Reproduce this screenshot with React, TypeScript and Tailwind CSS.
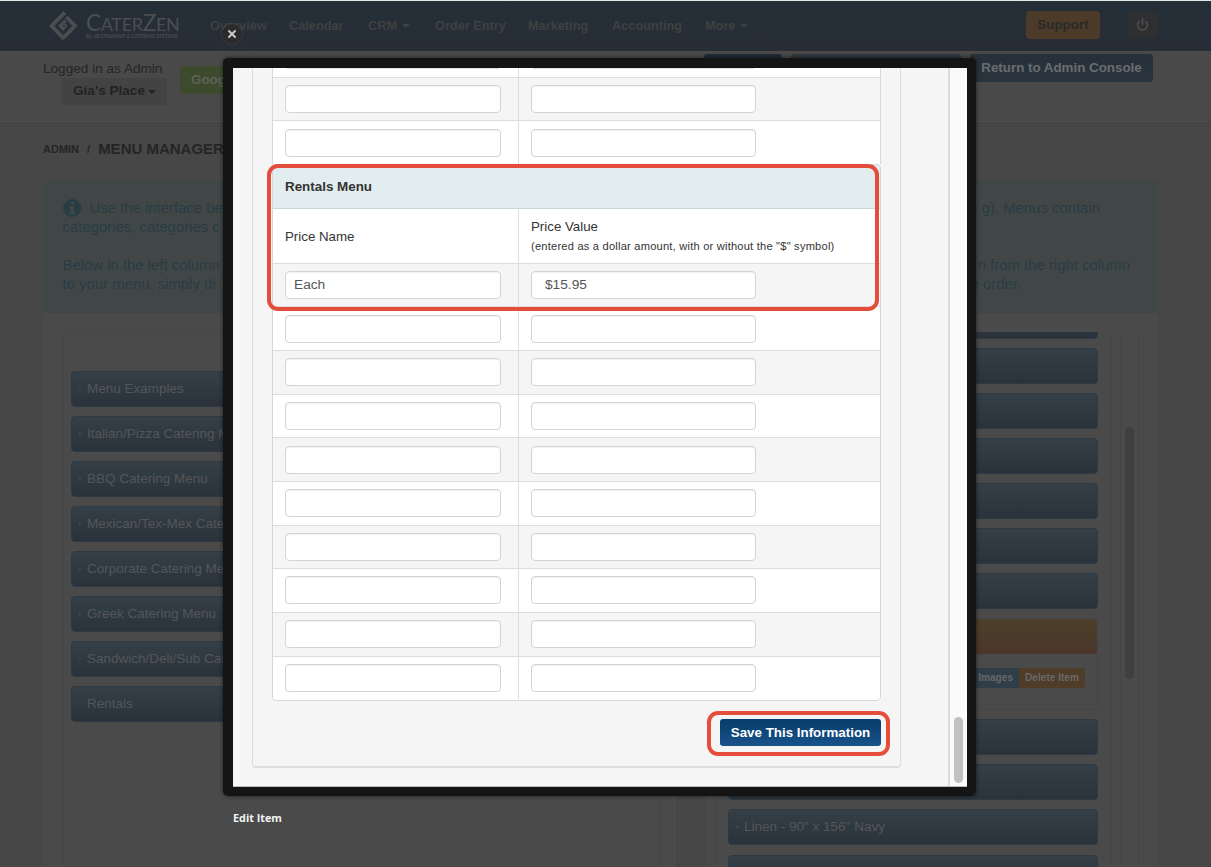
import { Power, X } from "lucide-react";

const navItems = [
  { name: "Overview", width: "w-[79px]" },
  { name: "Calendar", width: "w-[79px]" },
  { name: "CRM", width: "w-[67px]", caret: true },
  { name: "Order Entry", width: "w-[93px]" },
  { name: "Marketing", width: "w-[84px]" },
  { name: "Accounting", width: "w-[93px]" },
  { name: "More", width: "w-[60px]", caret: true },
];

const menus = [
  "Menu Examples",
  "Italian/Pizza Catering M",
  "BBQ Catering Menu",
  "Mexican/Tex-Mex Cate",
  "Corporate Catering Me",
  "Greek Catering Menu",
  "Sandwich/Deli/Sub Cat",
  "Rentals",
];

const prices = [
  { name: "Each", value: "$15.95" },
  ...Array.from({ length: 9 }, () => ({ name: "", value: "" })),
];

const Caret: React.FC = () => (
  <span className="inline-block border-x-4 border-t-4 border-x-transparent border-t-current" />
);

const Logo: React.FC = () => (
  <div className="flex w-[161px] items-center gap-[8px] text-[#4b4e50]">
    <svg width="29" height="30" viewBox="0 0 29 30" fill="none" stroke="currentColor">
      <path d="M15.8 1.6 L2.6 15 L15.2 27.8" strokeWidth="3.8" />
      <path d="M17.3 6 L26 14.8 L14.2 27" strokeWidth="3.8" />
      <path d="M16.6 9.6 L11.4 14.8 L15.4 18.8" strokeWidth="3.2" />
      <path d="M15.2 12.6 L17.4 14.8 L15.2 17" strokeWidth="1.6" />
    </svg>
    <div className="flex flex-col font-['Lato',sans-serif]">
      <div className="text-[18px] leading-[22px] whitespace-nowrap tracking-[-0.3px]">
        <span className="text-[22.5px]">C</span>ATER<span className="text-[22.5px]">Z</span>EN
      </div>
      <div className="-mt-[2px] text-[4.8px] leading-[6px] font-bold whitespace-nowrap tracking-[0.05px]">
        By: RESTAURANT &amp; CATERING SYSTEMS
      </div>
    </div>
  </div>
);

const MenuBar: React.FC<{ label?: string }> = ({ label }) => (
  <div className="flex h-[36px] shrink-0 items-center gap-[4px] rounded-[4px] border border-[#2e3942] bg-linear-to-b from-[#343f48] to-[#2a333b] pl-[7px] text-[13.5px] whitespace-nowrap text-[#545658]">
    {label && (
      <>
        <span className="h-0 w-[4px] border-y-[2px] border-l-[3px] border-y-transparent border-l-[#3d464d]" />
        <span>{label}</span>
      </>
    )}
  </div>
);

const Field: React.FC<{ value?: string; className: string }> = ({ value, className }) => (
  <div
    className={`flex h-[28px] items-center rounded-[4px] border border-[#d4d4d4] bg-white pt-px text-[13.7px] text-[#555] shadow-[inset_0_1px_1px_rgba(0,0,0,0.06)] ${className}`}
  >
    {value}
  </div>
);

const PriceRow: React.FC<{ name?: string; value?: string; striped: boolean }> = ({ name, value, striped }) => (
  <div className={`flex h-[43.67px] shrink-0 border-t border-[#dddddd] ${striped ? "bg-[#f5f5f5]" : "bg-white"}`}>
    <div className="w-[246px] border-r border-[#dddddd] pt-[7.3px] pl-[12px]">
      <Field value={name} className="w-[216px] pl-[8px]" />
    </div>
    <div className="pt-[7.3px] pl-[12px]">
      <Field value={value} className="w-[224.5px] pl-[13px]" />
    </div>
  </div>
);

const EditItemModal: React.FC = () => (
  <div className="absolute top-[58px] left-[223px] h-[738px] w-[753px] rounded-[5px] bg-[#141414] pt-[10px] pl-[10px] shadow-[0_0_4px_rgba(0,0,0,0.6)]">
    <button className="absolute top-[-34px] left-[-1px] flex h-[20px] w-[20px] items-center justify-center rounded-full bg-[#2b2b2b] text-[#c8c8c8] shadow-[0_0_2px_#555]">
      <X size={12} strokeWidth={4} />
    </button>

    <div className="flex h-[719px] w-[734px] overflow-hidden border-b border-[#bbbbbb] bg-[#f5f5f5]">
      <div className="w-[717px] border-r-2 border-[#dcdcdc] pl-[19px]">
        <div className="flex h-[700px] w-[649px] flex-col rounded-b-[4px] border-x border-b-2 border-[#dcdcdc] pl-[19px]">
          <div className="flex w-[609px] flex-col border-x border-[#d8d8d8]">
            <div className="flex h-[8.7px] bg-white">
              <div className="w-[246px] border-r border-[#dddddd] pl-[14px]">
                <div className="h-px w-[212px] bg-[#dddddd]" />
              </div>
              <div className="pl-[14px]">
                <div className="h-px w-[221px] bg-[#dddddd]" />
              </div>
            </div>
            <PriceRow striped />
            <PriceRow striped={false} />
          </div>
          <div className="flex h-[536.8px] w-[609px] flex-col overflow-hidden rounded-[4px] border border-[#d4d8d9] bg-white text-[14px] text-[#333]">
            <div className="h-[43px] shrink-0 bg-[#e2edef] pt-[11px] pl-[12px] leading-[21px] font-bold">
              <span className="text-[13.4px]">Rentals Menu</span>
            </div>
            <div className="flex h-[54.6px] shrink-0 border-t border-[#cbd8da]">
              <div className="flex w-[246px] items-center border-r border-[#dddddd] pt-[2px] pl-[12px] text-[13.3px]">
                Price Name
              </div>
              <div className="pt-[8px] pl-[12px]">
                <div className="text-[13.3px] leading-[19px]">Price Value</div>
                <div className="text-[11.1px] leading-[20px] tracking-[0.22px] whitespace-nowrap">
                  (entered as a dollar amount, with or without the "$" symbol)
                </div>
              </div>
            </div>
            {prices.map((price, i) => (
              <PriceRow key={i} name={price.name} value={price.value} striped={i % 2 === 0} />
            ))}
          </div>
          <div className="flex w-[609px] justify-end pt-[18px]">
            <button className="h-[27px] w-[161px] rounded-[3px] bg-linear-to-b from-[#053c6b] to-[#19538b] pt-[2px] text-[13.35px] font-bold whitespace-nowrap text-white">
              Save This Information
            </button>
          </div>
        </div>
      </div>
      <div className="flex w-[17px] flex-col items-center justify-end bg-[#fafafa] pb-[3px]">
        <div className="h-[66px] w-[9px] rounded-full bg-[#c1c1c1]" />
      </div>
    </div>

    {/* Callouts */}
    <div className="absolute top-[106px] left-[44px] h-[147px] w-[612px] rounded-[11px] border-4 border-[#e54d3b]" />
    <div className="absolute top-[653px] left-[484px] h-[45px] w-[183px] rounded-[11px] border-4 border-[#e54d3b]" />

    <div className="absolute top-[752px] left-[10px] font-['Open_Sans','Noto_Sans',sans-serif] text-[10.8px] leading-[16px] font-bold whitespace-nowrap text-[#f2f2f2]">
      Edit Item
    </div>
  </div>
);

export default function App() {
  return (
    <div className="relative flex h-[867px] w-[1211px] flex-col overflow-hidden bg-[#474747] font-['Liberation_Sans',Arial,sans-serif]">
      <header className="flex h-[51px] shrink-0 items-center border-t border-b border-t-[#dfe8e2] border-b-[#2b2f34] bg-linear-to-b from-[#242f37] to-[#272d37] pl-[49px]">
        <Logo />
        <nav className="flex w-[816px] text-[12.75px] font-bold text-[#3f4041]">
          {navItems.map((item) => (
            <div key={item.name} className={`flex items-center gap-[5px] whitespace-nowrap ${item.width}`}>
              {item.name}
              {item.caret && <Caret />}
            </div>
          ))}
        </nav>
        <button className="mb-[2px] h-[28px] w-[74px] rounded-[4px] bg-[#4d3b2a] pt-px text-[13.4px] font-bold text-[#292929]">
          Support
        </button>
        <button className="mb-[2px] ml-[28px] flex h-[27px] w-[30px] items-center justify-center rounded-[3px] bg-[#2e2f31] pr-px text-[#505050]">
          <Power size={13} strokeWidth={3} />
        </button>
      </header>

      {/* Account bar */}
      <div className="flex h-[73px] shrink-0 border-b border-[#404040] bg-[#494949] text-[#222] shadow-[0_2px_0_#484848,0_3px_0_#424242]">
        <div className="flex w-[137px] flex-col pt-[8px] pl-[43px]">
          <span className="text-[13.6px] leading-[19px] whitespace-nowrap text-[#252525]">Logged in as Admin</span>
          <span className="ml-[19px] flex h-[27px] w-[105px] items-center justify-center gap-[3px] rounded-[3px] bg-[#434343] text-[13.6px] font-bold whitespace-nowrap">
            Gia's Place <Caret />
          </span>
        </div>
        <div className="ml-[43px] flex pt-[15px]">
          <button className="h-[28px] w-[100px] rounded-[4px] bg-[#3d4a2d] pl-[11px] text-left text-[13.4px] font-bold text-[#5d6157]">
            Goog
          </button>
        </div>
        <div className="ml-[424px] flex gap-[9px] pt-[3px]">
          <span className="h-[28px] w-[78px] rounded-[3px] bg-[#212c36]" />
          <span className="h-[28px] w-[170px] rounded-[3px] bg-[#2f383f]" />
          <button className="h-[28px] w-[183px] rounded-[3px] bg-linear-to-b from-[#25303a] to-[#2a343d] text-[13.35px] font-bold whitespace-nowrap text-[#6a6d6f]">
            Return to Admin Console
          </button>
        </div>
      </div>

      <div className="flex h-[56px] shrink-0 items-center gap-[8px] pb-[6px] pl-[43px] font-bold whitespace-nowrap text-[#252525]">
        <span className="pt-[1px] text-[11px]">ADMIN</span>
        <span className="pt-[1px] text-[11px]">/</span>
        <span className="text-[15px]">MENU MANAGER</span>
      </div>

      <main className="mx-[43px] flex w-[1115px] grow flex-col">
        <div className="flex h-[133px] shrink-0 justify-between rounded-t-[4px] bg-[#414747] pr-[28px] pl-[19.5px] pt-[19px] text-[14.9px] leading-[19px] whitespace-nowrap text-[#293c44]">
          <div className="w-[170px]">
            <div className="flex items-center">
              <svg width="19" height="19" viewBox="0 0 19 19" className="mr-[8px] shrink-0">
                <circle cx="9.2" cy="9" r="9" fill="#293c44" />
                <path d="M7.7 3h3.2v2.6H7.7z M6.3 7h4.6v5.8h1.4V15H6.3v-2.2h1.4V9.2H6.3z" fill="#414747" />
              </svg>
              Use the interface be
            </div>
            <div>categories, categories c</div>
            <div className="pt-[19px]">Below in the left column</div>
            <div>to your menu, simply dr</div>
          </div>
          <div className="w-[170px]">
            <div className="flex w-[140px] justify-end">g). Menus contain</div>
            <div className="flex w-[170px] justify-end pt-[38px]">n from the right column</div>
            <div className="flex w-[61px] justify-end">e order.</div>
          </div>
        </div>

        <div className="flex h-[554px] justify-between">
          <div className="w-[635px] border-r border-[#434343] bg-[#4a4a4a] pt-[19px] pl-[20px]">
            <div className="flex h-full w-[598px] flex-col gap-[9px] rounded-tl-[3px] border border-[#464646] pt-[38px] pr-[20px] pl-[7px]">
              {menus.map((menu) => (
                <MenuBar key={menu} label={menu} />
              ))}
            </div>
          </div>

          <div className="w-[451px] bg-[#4a4a4a] pt-[19px] pl-[8px]">
            <div className="flex h-[535px] w-[424px] overflow-hidden border-r border-[#454545]">
              <div className="flex w-[397px] shrink-0 flex-col border-x border-[#454545] pr-[13px] pl-[12px]">
                <div className="mt-[-29px] flex flex-col gap-[9px]">
                  {Array.from({ length: 7 }, (_, i) => (
                    <MenuBar key={i} />
                  ))}
                </div>
                {/* Open item with its actions */}
                <div className="mt-[9px] h-[92px] shrink-0 border border-[#464646]">
                  <div className="h-[35px] rounded-t-[4px] bg-linear-to-b from-[#4d402b] to-[#4a362a]" />
                  <div className="flex justify-end pt-[14px] pr-[12px] text-[10.1px] font-bold text-[#686868]">
                    <span className="flex h-[20px] w-[80px] items-center justify-end bg-[#2f3e49] pr-[6px]">Images</span>
                    <span className="flex h-[20px] w-[66px] items-center justify-center rounded-r-[3px] bg-[#4f3c29] whitespace-nowrap">
                      Delete Item
                    </span>
                  </div>
                </div>
                <div className="mt-[9px] flex flex-col gap-[9.2px]">
                  <MenuBar />
                  <MenuBar />
                  <MenuBar label={'Linen - 90" x 156" Navy'} />
                  <MenuBar />
                </div>
              </div>
              <div className="ml-[8px] w-[18px] border-l border-[#454545] pt-[95px] pl-[4px]">
                <div className="h-[252px] w-[9px] rounded-full bg-[#3f3f3f]" />
              </div>
            </div>
          </div>
        </div>
      </main>

      <EditItemModal />
    </div>
  );
}
